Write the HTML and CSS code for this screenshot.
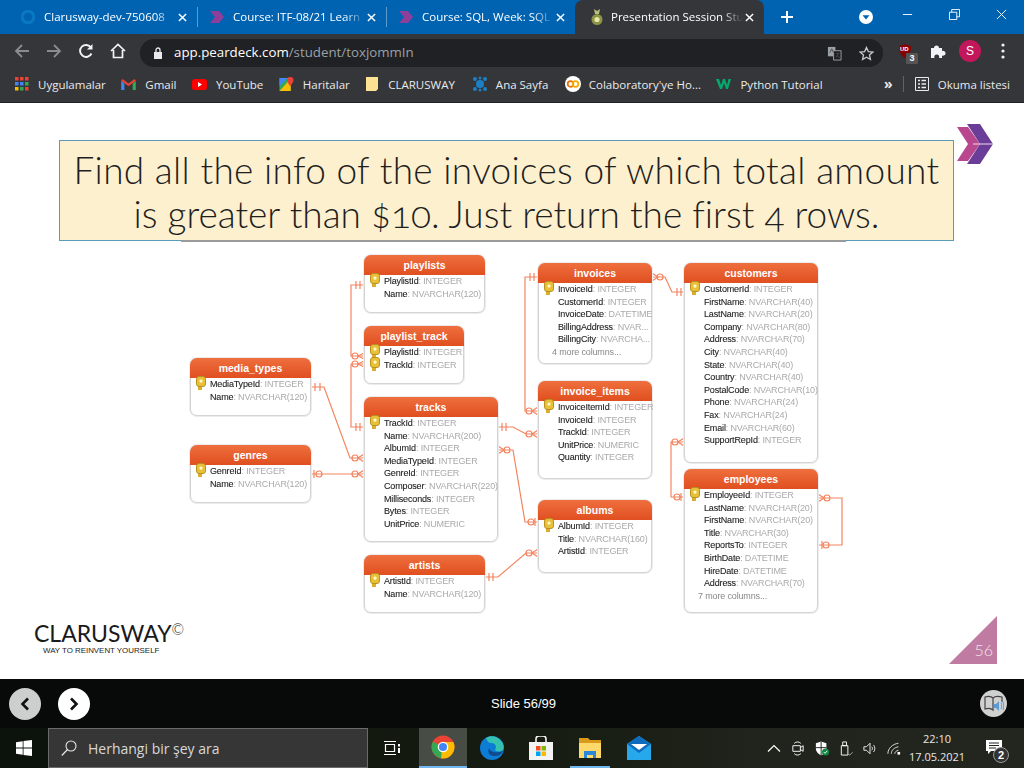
FILE: index.html
```html
<!DOCTYPE html>
<html lang="tr">
<head>
<meta charset="utf-8">
<title>Presentation Session</title>
<link rel="stylesheet" href="styles.css">
</head>
<body>
<div class="screen">
  <header class="tabstrip">
    <div class="tab">
      <svg class="ticon" viewBox="0 0 16 16"><circle cx="8" cy="8" r="5.8" fill="none" stroke="#0a78c2" stroke-width="3"/></svg>
      <span class="ttext">Clarusway-dev-750608</span>
      <svg class="tclose" viewBox="0 0 10 10"><path d="M1 1l8 8M9 1l-8 8" stroke="#fff" stroke-width="1.6"/></svg>
    </div>
    <div class="tab sep">
      <svg class="ticon" viewBox="0 0 16 16"><path d="M1 2h5l5 6-5 6H1l5-6zM6 2h4l5 6-5 6H6l5-6z" fill="#8e3f9a"/></svg>
      <span class="ttext">Course: ITF-08/21 Learn</span>
      <svg class="tclose" viewBox="0 0 10 10"><path d="M1 1l8 8M9 1l-8 8" stroke="#fff" stroke-width="1.6"/></svg>
    </div>
    <div class="tab sep">
      <svg class="ticon" viewBox="0 0 16 16"><path d="M1 2h5l5 6-5 6H1l5-6zM6 2h4l5 6-5 6H6l5-6z" fill="#8e3f9a"/></svg>
      <span class="ttext">Course: SQL, Week: SQL</span>
      <svg class="tclose" viewBox="0 0 10 10"><path d="M1 1l8 8M9 1l-8 8" stroke="#fff" stroke-width="1.6"/></svg>
    </div>
    <div class="tab active">
      <svg class="ticon" viewBox="0 0 16 16"><path d="M5 0l3 2 3-2-1 5H6z" fill="#b9c07a"/><ellipse cx="8" cy="10.500" rx="5.500" ry="5.500" fill="#8c9448"/><circle cx="8" cy="10.500" r="2.600" fill="#e8e6a8"/></svg>
      <span class="ttext">Presentation Session Stu</span>
      <svg class="tclose" viewBox="0 0 10 10"><path d="M1 1l8 8M9 1l-8 8" stroke="#fff" stroke-width="1.6"/></svg>
    </div>
    <svg class="newtab" viewBox="0 0 12 12"><path d="M6 0v12M0 6h12" stroke="#fff" stroke-width="2"/></svg>
    <svg class="profile-drop" viewBox="0 0 14 14"><circle cx="7" cy="7" r="7" fill="#fff"/><path d="M3.500 5.200h7L7 9.600z" fill="#0063b1"/></svg>
    <div class="winctl">
      <svg viewBox="0 0 12 12"><path d="M1 6h10" stroke="#fff"/></svg>
      <svg viewBox="0 0 12 12"><path d="M.5 3.500h8v8h-8zM3 3.500V.5h8.500v8H8.500" fill="none" stroke="#fff"/></svg>
      <svg viewBox="0 0 12 12"><path d="M1 1l10 10M11 1L1 11" stroke="#fff"/></svg>
    </div>
  </header>

  <nav class="toolbar">
    <svg class="tb dim" viewBox="0 0 16 16"><path d="M15 8H2M8 2L2 8l6 6" fill="none" stroke="#8b8c8e" stroke-width="1.8"/></svg>
    <svg class="tb dim" viewBox="0 0 16 16"><path d="M1 8h13M8 2l6 6-6 6" fill="none" stroke="#8b8c8e" stroke-width="1.8"/></svg>
    <svg class="tb" viewBox="0 0 16 16"><path d="M13.500 10.500A6 6 0 1 1 13 4.500" fill="none" stroke="#f1f3f4" stroke-width="1.900"/><path d="M14.500 1v5.500H9z" fill="#f1f3f4"/></svg>
    <svg class="tb" viewBox="0 0 16 16"><path d="M1 8l7-6.500L15 8M3.500 7v7.500h9V7" fill="none" stroke="#f1f3f4" stroke-width="1.700"/></svg>
    <div class="omnibox">
      <svg class="lock" viewBox="0 0 10 12"><path d="M1 5h8v7H1z" fill="#e8eaed"/><path d="M3 5V3a2 2 0 0 1 4 0v2" fill="none" stroke="#e8eaed" stroke-width="1.300"/></svg>
      <span class="url"><b>app.peardeck.com</b>/student/toxjommIn</span>
      <svg class="omni-icon" viewBox="0 0 16 16"><path d="M1 1h8v10H1z" fill="#9aa0a6"/><path d="M7 5h8v10H7z" fill="#202124" stroke="#9aa0a6"/><path d="M3 7l2-4 2 4M10 8h3M11.500 8c0 2-1 3-2 4M10.500 10c1 1 2 2 3 2" fill="none" stroke="#4a4b4e"/></svg>
      <svg class="omni-icon star" viewBox="0 0 16 16"><path d="M8 1.500l2 4.400 4.800.5-3.600 3.200 1 4.700L8 11.900l-4.200 2.400 1-4.700L1.200 6.400 6 5.900z" fill="none" stroke="#c4c7c5" stroke-width="1.400"/></svg>
    </div>
    <div class="ublock">
      <svg viewBox="0 0 16 16"><path d="M1 2.500L8 0l7 2.500c0 6-2 10.500-7 13.500-5-3-7-7.500-7-13.500z" fill="#800"/></svg>
      <span class="ub-txt">UD</span>
      <span class="badge">3</span>
    </div>
    <svg class="tb puzzle" viewBox="0 0 16 16"><path d="M1 5h3a2.500 2.500 0 1 1 5 0h3v3a2.500 2.500 0 1 1 0 4.500V15H9a2.500 2.500 0 1 0-4.500 0H1z" fill="#f1f3f4"/></svg>
    <div class="avatar">S</div>
    <svg class="kebab" viewBox="0 0 4 16"><circle cx="2" cy="2" r="1.600" fill="#f1f3f4"/><circle cx="2" cy="8" r="1.600" fill="#f1f3f4"/><circle cx="2" cy="14" r="1.600" fill="#f1f3f4"/></svg>
  </nav>

  <nav class="bookmarks">
    <div class="bm bm-apps"><svg viewBox="0 0 14 14"><g fill="#ea4335"><path d="M0 0h3.500v3.500H0zM5 0h3.500v3.500H5zM10 0h3.500v3.500H10z"/></g><g fill="#4285f4"><path d="M0 5h3.500v3.500H0zM5 5h3.500v3.500H5z"/></g><path d="M10 5h3.500v3.500H10z" fill="#34a853"/><g fill="#fbbc04"><path d="M0 10h3.500v3.500H0z"/></g><path d="M5 10h3.500v3.500H5z" fill="#34a853"/><path d="M10 10h3.500v3.500H10z" fill="#ea4335"/></svg><span>Uygulamalar</span></div>
    <div class="bm bm-gmail"><svg viewBox="0 0 16 12"><path d="M0 2v10h3.500V5z" fill="#4285f4"/><path d="M12.500 5v7H16V2z" fill="#34a853"/><path d="M0 2l8 6 8-6-1.500-2L8 4.800 1.500 0z" fill="#ea4335"/></svg><span>Gmail</span></div>
    <div class="bm bm-yt"><svg viewBox="0 0 15 11"><rect width="15" height="11" rx="2.500" fill="#f00"/><path d="M6 3l4 2.500L6 8z" fill="#fff"/></svg><span>YouTube</span></div>
    <div class="bm bm-maps"><svg viewBox="0 0 15 15"><path d="M0 1h12v14H0z" fill="#34a853"/><path d="M0 15L9 5l3 4v6z" fill="#fbbc04"/><path d="M0 1h9L0 10z" fill="#4285f4"/><path d="M11.500 0a3.500 3.500 0 0 1 3.500 3.500c0 2-2 4-3.500 6.500C10 7.500 8 5.500 8 3.500A3.500 3.500 0 0 1 11.500 0z" fill="#ea4335"/></svg><span>Haritalar</span></div>
    <div class="bm bm-note"><svg viewBox="0 0 12 14"><path d="M0 0h12v12l-2 2H0z" fill="#fde293"/></svg><span>CLARUSWAY</span></div>
    <div class="bm bm-ana"><svg viewBox="0 0 16 16"><g fill="#1c7fc4"><circle cx="8" cy="8" r="4"/><circle cx="3" cy="3" r="2"/><circle cx="13" cy="3" r="2"/><circle cx="3" cy="13" r="2"/><circle cx="13" cy="13" r="2"/><circle cx="8" cy="2" r="1.500"/><circle cx="8" cy="14" r="1.500"/></g></svg><span>Ana Sayfa</span></div>
    <div class="bm bm-colab"><svg viewBox="0 0 16 16"><circle cx="8" cy="8" r="8" fill="#fff"/><circle cx="5.500" cy="8" r="2.800" fill="none" stroke="#e8710a" stroke-width="1.800"/><circle cx="10.500" cy="8" r="2.800" fill="none" stroke="#f9ab00" stroke-width="1.800"/></svg><span>Colaboratory'ye Ho...</span></div>
    <div class="bm bm-w3"><svg viewBox="0 0 16 12"><path d="M0 1h3l2 6 2-6h2l2 6 1.500-6H15l-3 10h-2L8 5l-2 6H4z" fill="#04aa6d"/></svg><span>Python Tutorial</span></div>
    <div class="bm-end">
      <span class="more">»</span>
      <span class="bm-sep"></span>
      <svg class="read" viewBox="0 0 14 14"><path d="M.5.500h13v13H.500z" fill="none" stroke="#e8eaed"/><path d="M3 3.500h2M6.500 3.500H11M3 7h2M6.500 7H11M3 10.500h2M6.500 10.500H11" stroke="#e8eaed" stroke-width="1.400"/></svg>
      <span class="read-txt">Okuma listesi</span>
    </div>
  </nav>

  <main class="slide">
    <div class="titlebox"><span class="line-a">Find all the info of the invoices of which total amount</span><span class="line-b">is greater than $10. Just return the first 4 rows.</span></div>
    <svg class="brand" viewBox="0 0 36 40"><path d="M0 3h11l12 17-12 17H0l11-17z" fill="#b8478f"/><path d="M10 0h13l13 20-13 20H10l13-20z" fill="#6a3d98"/><path d="M16 20h20" stroke="#f3d9ec" stroke-width="1"/></svg>

    <section class="diagram">
      <svg class="links" viewBox="0 250 1024 364">
        <g fill="none" stroke="#f4845f" stroke-width="1.200">
          <path d="M364 285H351V356H364M351 364H364M351 364V427H364"/>
          <path d="M311 387H324L350 458H364"/>
          <path d="M311 474H364"/>
          <path d="M498 427H513L526 434H538"/>
          <path d="M498 450H513L525 522H538"/>
          <path d="M485 577H498L526 553H538"/>
          <path d="M538 277H525V411H538"/>
          <path d="M652 277H665L672 292H684"/>
          <path d="M684 442H671V497H684"/>
          <path d="M818 498H842V545H818"/>
          <path d="M356 281v8M360 281v8M315 383v8M320 383v8M356 423v8M360 423v8M314 470v8M502 423v8M506 423v8M489 573v8M493 573v8M530 273v8M534 273v8M677 288v8M681 288v8M535 518v8M681 493v8M822 541v8"/>
          <path d="M364 353L358 356L364 359M364 361L358 364L364 367M364 454L358 458L364 462M364 470L358 474L364 478M538 407L532 411L538 415M538 430L532 434L538 438M538 549L532 553L538 557M652 273L658 277L652 281M498 446L504 450L498 454M684 438L678 442L684 446M818 494L824 498L818 502"/>
          <circle cx="355" cy="356" r="3"/><circle cx="355" cy="364" r="3"/><circle cx="355" cy="458" r="3"/><circle cx="355" cy="474" r="3"/><circle cx="319" cy="474" r="3"/><circle cx="529" cy="411" r="3"/><circle cx="529" cy="434" r="3"/><circle cx="507" cy="450" r="3"/><circle cx="531" cy="522" r="3"/><circle cx="529" cy="553" r="3"/><circle cx="660" cy="277" r="3"/><circle cx="675" cy="442" r="3"/><circle cx="677" cy="497" r="3"/><circle cx="827" cy="498" r="3"/><circle cx="826" cy="545" r="3"/>
        </g>
      </svg>

      <article class="tbl t-playlists"><h3>playlists</h3>
        <p class="pk">PlaylistId<i>: INTEGER</i></p><p>Name<i>: NVARCHAR(120)</i></p></article>
      <article class="tbl t-track2"><h3>playlist_track</h3>
        <p class="pk">PlaylistId<i>: INTEGER</i></p><p class="pk">TrackId<i>: INTEGER</i></p></article>
      <article class="tbl t-media"><h3>media_types</h3>
        <p class="pk">MediaTypeId<i>: INTEGER</i></p><p>Name<i>: NVARCHAR(120)</i></p></article>
      <article class="tbl t-tracks"><h3>tracks</h3>
        <p class="pk">TrackId<i>: INTEGER</i></p><p>Name<i>: NVARCHAR(200)</i></p><p>AlbumId<i>: INTEGER</i></p><p>MediaTypeId<i>: INTEGER</i></p><p>GenreId<i>: INTEGER</i></p><p>Composer<i>: NVARCHAR(220)</i></p><p>Milliseconds<i>: INTEGER</i></p><p>Bytes<i>: INTEGER</i></p><p>UnitPrice<i>: NUMERIC</i></p></article>
      <article class="tbl t-genres"><h3>genres</h3>
        <p class="pk">GenreId<i>: INTEGER</i></p><p>Name<i>: NVARCHAR(120)</i></p></article>
      <article class="tbl t-artists"><h3>artists</h3>
        <p class="pk">ArtistId<i>: INTEGER</i></p><p>Name<i>: NVARCHAR(120)</i></p></article>
      <article class="tbl t-invoices"><h3>invoices</h3>
        <p class="pk">InvoiceId<i>: INTEGER</i></p><p>CustomerId<i>: INTEGER</i></p><p>InvoiceDate<i>: DATETIME</i></p><p>BillingAddress<i>: NVAR...</i></p><p>BillingCity<i>: NVARCHA...</i></p><p class="morecols">4 more columns...</p></article>
      <article class="tbl t-items"><h3>invoice_items</h3>
        <p class="pk">InvoiceItemId<i>: INTEGER</i></p><p>InvoiceId<i>: INTEGER</i></p><p>TrackId<i>: INTEGER</i></p><p>UnitPrice<i>: NUMERIC</i></p><p>Quantity<i>: INTEGER</i></p></article>
      <article class="tbl t-albums"><h3>albums</h3>
        <p class="pk">AlbumId<i>: INTEGER</i></p><p>Title<i>: NVARCHAR(160)</i></p><p>ArtistId<i>: INTEGER</i></p></article>
      <article class="tbl t-customers"><h3>customers</h3>
        <p class="pk">CustomerId<i>: INTEGER</i></p><p>FirstName<i>: NVARCHAR(40)</i></p><p>LastName<i>: NVARCHAR(20)</i></p><p>Company<i>: NVARCHAR(80)</i></p><p>Address<i>: NVARCHAR(70)</i></p><p>City<i>: NVARCHAR(40)</i></p><p>State<i>: NVARCHAR(40)</i></p><p>Country<i>: NVARCHAR(40)</i></p><p>PostalCode<i>: NVARCHAR(10)</i></p><p>Phone<i>: NVARCHAR(24)</i></p><p>Fax<i>: NVARCHAR(24)</i></p><p>Email<i>: NVARCHAR(60)</i></p><p>SupportRepId<i>: INTEGER</i></p></article>
      <article class="tbl t-employees"><h3>employees</h3>
        <p class="pk">EmployeeId<i>: INTEGER</i></p><p>LastName<i>: NVARCHAR(20)</i></p><p>FirstName<i>: NVARCHAR(20)</i></p><p>Title<i>: NVARCHAR(30)</i></p><p>ReportsTo<i>: INTEGER</i></p><p>BirthDate<i>: DATETIME</i></p><p>HireDate<i>: DATETIME</i></p><p>Address<i>: NVARCHAR(70)</i></p><p class="morecols">7 more columns...</p></article>
    </section>

    <footer class="slidefoot">
      <div class="logo">
        <div class="logo-main">CLARUSWAY<sup>©</sup></div>
        <div class="logo-sub">WAY TO REINVENT YOURSELF</div>
      </div>
      <div class="pagenum"><span>56</span></div>
    </footer>
  </main>

  <section class="slidebar">
    <button class="round prev"><svg viewBox="0 0 10 14"><path d="M8 1.500L2.500 7 8 12.500" fill="none" stroke="#111" stroke-width="2.600"/></svg></button>
    <button class="round next"><svg viewBox="0 0 10 14"><path d="M2 1.500L7.500 7 2 12.500" fill="none" stroke="#111" stroke-width="2.600"/></svg></button>
    <span class="slidecount">Slide 56/99</span>
    <div class="readaloud"><svg viewBox="0 0 20 18"><path d="M1 2c3-1 6-1 8 1v12c-2-2-5-2-8-1zM9 3c2-2 5-2 9-1v5" fill="none" stroke="#444" stroke-width="1.200"/><path d="M10 9h2l3-3v10l-3-3h-2z" fill="#5b9bd5"/><path d="M17 8c1 2 1 4 0 6M19 7c1 3 1 5 0 8" fill="none" stroke="#5b9bd5"/></svg></div>
  </section>

  <footer class="taskbar">
    <svg class="win" viewBox="0 0 16 16"><path d="M0 2.200l6.700-1v6.400H0zM7.500 1.100L16 0v7.600H7.500zM0 8.400h6.700v6.400l-6.700-1zM7.500 8.400H16V16l-8.500-1.100z" fill="#fff"/></svg>
    <div class="search">
      <svg viewBox="0 0 16 16"><circle cx="10" cy="6" r="5" fill="none" stroke="#e6e6e6" stroke-width="1.100"/><path d="M6.500 9.500L.800 15.500" stroke="#e6e6e6" stroke-width="1.200"/></svg>
      <span>Herhangi bir şey ara</span>
    </div>
    <svg class="taskview" viewBox="0 0 16 16"><path d="M0 1.500h12M0 14.500h12M1.500 4.500h9v7h-9z" fill="none" stroke="#fff" stroke-width="1.200"/><path d="M14 4h2v2.500h-2zM14 8h2v5h-2z" fill="#fff"/></svg>
    <div class="app chrome"><svg viewBox="0 0 24 24"><circle cx="12" cy="12" r="11.500" fill="#ea4335"/><path d="M12 12L2 6.500A11.500 11.500 0 0 0 10 23.300z" fill="#34a853"/><path d="M12 7h10.300A11.500 11.500 0 0 1 10 23.300z" fill="#fbbc04"/><circle cx="12" cy="12" r="5.300" fill="#fff"/><circle cx="12" cy="12" r="4" fill="#4285f4"/></svg></div>
    <div class="app"><svg viewBox="0 0 24 24"><circle cx="12" cy="12" r="12" fill="#0c7cd5"/><path d="M6 2c5-3 12-2 16 4 2 3 2 6 1 8-1 2-6 2-8 0 2-3 1-7-4-7-3 0-4-3-5-5z" fill="#35c1b0"/><path d="M14 20c-4 0-7-3-5-8 1 4 6 5 10 4 2 0 3-1 4-2-1 4-4 6-9 6z" fill="#114a8b"/></svg></div>
    <div class="app"><svg viewBox="0 0 24 24"><path d="M0 6h24v18H0z" fill="#f3f3f3"/><path d="M7 7V3a3 3 0 0 1 3-3h4a3 3 0 0 1 3 3v4" fill="none" stroke="#f3f3f3" stroke-width="1.600"/><path d="M7 10h4.500v4.500H7z" fill="#f25022"/><path d="M12.500 10H17v4.500h-4.500z" fill="#7fba00"/><path d="M7 15.500h4.500V20H7z" fill="#00a4ef"/><path d="M12.500 15.500H17V20h-4.500z" fill="#ffb900"/></svg></div>
    <div class="app open"><svg viewBox="0 0 24 24"><path d="M1 2h9l2 2h11v18H1z" fill="#d99a1c"/><path d="M1 7h22v15H1z" fill="#ffd86b"/><path d="M6 15h12v7h-3v-3H9v3H6z" fill="#2b87d8"/></svg></div>
    <div class="app"><svg viewBox="0 0 24 24"><path d="M0 8L12 0l12 8v16H0z" fill="#27a8ea"/><path d="M0 8l12 9 12-9L12 0z" fill="#0f6cbd"/><path d="M4 8h16l-8 6z" fill="#fff"/></svg></div>
    <div class="tray">
      <svg viewBox="0 0 14 8"><path d="M1 7l6-6 6 6" fill="none" stroke="#fff" stroke-width="1.200"/></svg>
      <svg viewBox="0 0 14 16"><path d="M1.500 5h8v6h-8zM9.500 7l3-2v6l-3-2" fill="none" stroke="#fff"/><path d="M3 2.500c2-2 5-2 7 0M3 13.500c2 2 5 2 7 0" fill="none" stroke="#fff"/></svg>
      <svg viewBox="0 0 16 16"><path d="M1 2l6-2 6 2v6c0 4-3 6-6 8-3-2-6-4-6-8z" fill="#fff"/><path d="M7 0v16" stroke="#111"/><path d="M1 7h12" stroke="#111"/><circle cx="12" cy="12" r="4" fill="#0f8a44"/><path d="M10 12l1.500 1.500 2.500-3" fill="none" stroke="#fff"/></svg>
      <svg viewBox="0 0 14 16"><path d="M2 5h7v10H2zM3.500 1h4v4h-4z" fill="none" stroke="#fff"/><path d="M9 14l2 1 3-3" fill="none" stroke="#aaa"/></svg>
      <svg viewBox="0 0 16 14"><path d="M1 5h3l4-4v12l-4-4H1z" fill="none" stroke="#fff"/><path d="M10 5c1 1 1 3 0 4M12 3c2 2 2 6 0 8" fill="none" stroke="#fff"/></svg>
      <svg viewBox="0 0 16 14"><path d="M1 13C1 7 6 2 13 1M5 13c0-4 3-7 8-8M9 13c0-2 1-3 4-4" fill="none" stroke="#ddd" stroke-width="1.100"/><path d="M12 11h3v3h-3z" fill="#fff"/></svg>
    </div>
    <div class="clock"><span>22:10</span><span>17.05.2021</span></div>
    <div class="notif">
      <svg viewBox="0 0 16 14"><path d="M0 0h16v11H5l-3 3v-3H0z" fill="#fff"/><path d="M3 3h10M3 5.500h10M3 8h7" stroke="#222"/></svg>
      <span class="notif-n">2</span>
    </div>
  </footer>
</div>
</body>
</html>
```
FILE: styles.css
```css
* { box-sizing: border-box; }
html, body { margin: 0; padding: 0; }
body { width: 1024px; height: 768px; overflow: hidden; font-family: "Open Sans", "Liberation Sans", sans-serif; background: #fff; }
.screen { width: 1024px; height: 768px; display: flex; flex-direction: column; }
svg { display: block; flex: none; }

/* tab strip */
.tabstrip { height: 34px; background: #0063b1; display: flex; align-items: stretch; padding-left: 8px; color: #fff; font-size: 11.500px; }
.tab { width: 189px; display: flex; align-items: center; padding: 0 10px 0 12px; position: relative; }
.tab.sep::before { content: ""; position: absolute; left: 0; top: 7px; height: 20px; width: 1px; background: #5d9ccf; }
.tab.active { background: #35363a; border-radius: 8px 8px 0 0; padding-left: 14px; }
.ticon { width: 16px; height: 16px; }
.ttext { flex: 1; margin: 0 0 2px 8px; white-space: nowrap; overflow: hidden; -webkit-mask-image: linear-gradient(to right, #000 84%, transparent); mask-image: linear-gradient(to right, #000 84%, transparent); }
.active .ttext { margin-left: 6px; }
.tclose { width: 9px; height: 9px; margin-left: 2px; }
.newtab { width: 12px; height: 12px; margin: 11px 0 0 17px; }
.profile-drop { width: 14px; height: 14px; margin: 10px 0 0 66px; }
.winctl { margin-left: auto; display: flex; align-items: flex-start; }
.winctl svg { width: 11px; height: 11px; margin: 9px 17px 0 18px; }
.winctl svg + svg { margin-left: 19px; }
.winctl svg:last-child { margin-right: 17px; }

/* toolbar */
.toolbar { height: 34px; background: #35363a; display: flex; align-items: center; padding: 0 0 0 14px; }
.tb { width: 16px; height: 16px; margin-right: 16px; }
.omnibox { width: 743px; height: 28px; margin-left: -2px; background: #202124; border-radius: 14px; display: flex; align-items: center; padding-left: 13px; position: relative; top: 2px; }
.lock { width: 10px; height: 12px; }
.url { margin: 0 0 2px 11px; font-size: 13.300px; color: #9aa0a6; white-space: nowrap; flex: 1; }
.url b { font-weight: 400; color: #fff; }
.omni-icon { width: 15px; height: 15px; margin-right: 17px; }
.omni-icon.star { margin-right: 9px; }
.ublock { position: relative; width: 16px; height: 16px; margin: 0 0 0 15px; }
.ublock svg { width: 14px; height: 16px; }
.ub-txt { position: absolute; left: 2px; top: 3px; font: 700 6px "Liberation Sans", sans-serif; color: #fff; }
.badge { position: absolute; left: 8px; top: 10px; width: 12px; height: 11px; background: #555; color: #fff; font: 700 9px/11px "Liberation Sans", sans-serif; text-align: center; border-radius: 1px; }
.puzzle { margin: 0 0 0 16px; }
.avatar { width: 22px; height: 22px; border-radius: 50%; background: #c2185b; color: #fff; font: 12px/22px "Liberation Sans", sans-serif; text-align: center; margin-left: 13px; }
.kebab { width: 4px; height: 16px; margin-left: 20px; }

/* bookmarks */
.bookmarks { height: 35px; background: #35363a; border-bottom: 1px solid #202124; display: flex; align-items: center; padding: 0 0 2px 15px; color: #e8eaed; font-size: 11.500px; }
.bm { display: flex; align-items: center; white-space: nowrap; margin-right: 15.500px; }
.bm svg { width: 15px; height: 14px; margin-right: 9px; }
.bm-apps svg { width: 14px; height: 14px; margin-right: 9px; }
.bm-gmail svg { height: 11px; }
.bm-yt svg { height: 11px; }
.bm-note { margin-left: 1px; }
.bm-note svg { width: 12px; height: 14px; margin-right: 10px; }
.bm-ana { margin-left: 1.500px; }
.bm-colab { margin-left: 1px; }
.bm-ana svg, .bm-colab svg, .bm-w3 svg { width: 16px; height: 16px; margin-right: 8px; }
.bm-w3 svg { height: 12px; }
.bm-end { margin-left: auto; display: flex; align-items: center; padding-right: 14px; }
.more { font-size: 14px; font-weight: 700; line-height: 1; margin-right: 10px; }
.bm-sep { width: 1px; height: 16px; background: #5f6368; margin-right: 11px; }
.read { width: 14px; height: 14px; margin-right: 9px; }
.read-txt { white-space: nowrap; }

/* slide */
.slide { height: 576px; background: #fff; position: relative; display: flex; flex-direction: column; padding-top: 37px; }
.titlebox { width: 895px; height: 101px; margin-left: 59px; flex: none; background: #fdf0cf; border: 1px solid #5a9cb8; text-align: center; font: 300 37px/44px Lato, "Open Sans", sans-serif; font-variant-numeric: oldstyle-nums; color: #1f1f1f; padding-top: 7px; white-space: nowrap; position: relative; }
.titlebox::after { content: ""; position: absolute; left: 121px; bottom: -2px; width: 665px; height: 2px; background: #9a9a9a; }
.line-a, .line-b { display: block; }
.line-a { letter-spacing: .31px; }
.brand { position: absolute; left: 957px; top: 21px; width: 36px; height: 40px; }
.diagram { position: relative; height: 364px; margin-top: 9px; flex: none; filter: blur(.35px); }
.links { position: absolute; left: 0; top: 0; width: 1024px; height: 364px; }
.tbl { position: absolute; background: #fff; border: 1px solid #d4d4d4; border-radius: 7px; box-shadow: 0 0 0 1px #ececec; font: 9px/12.60px "Liberation Sans", sans-serif; color: #222; }
.tbl h3 { margin: -1px -1px 0; height: 20px; border-radius: 7px 7px 0 0; background: linear-gradient(#ef6f3e, #e04f20); color: #fff; font: 700 10.500px/21px "Liberation Sans", sans-serif; text-align: center; }
.tbl p { margin: 0; padding-left: 19px; white-space: nowrap; letter-spacing: -.15px; position: relative; -webkit-text-stroke: .1px #222; }
.tbl i { font-style: normal; color: #aaa; -webkit-text-stroke: 0; }
.tbl .morecols { padding-left: 13px; color: #888; -webkit-text-stroke: 0; }
.pk::before { content: ""; position: absolute; left: 5px; top: -2px; width: 8px; height: 9px; background: radial-gradient(circle at 50% 45%, #fff6c8 22%, #e8c03a 28%); border: 1px solid #b8921f; border-radius: 3px; z-index: 1; }
.pk::after { content: ""; position: absolute; left: 7px; top: 6px; width: 4px; height: 6px; background: #dcae2c; }
.t-playlists { left: 364px; top: 5px; width: 121px; height: 58px; }
.t-track2 { left: 364px; top: 76px; width: 100px; height: 58px; }
.t-media { left: 190px; top: 108px; width: 121px; height: 58px; }
.t-tracks { left: 364px; top: 147px; width: 134px; height: 145px; }
.t-genres { left: 190px; top: 195px; width: 121px; height: 58px; }
.t-artists { left: 364px; top: 305px; width: 121px; height: 58px; }
.t-invoices { left: 538px; top: 13px; width: 114px; height: 101px; }
.t-items { left: 538px; top: 131px; width: 114px; height: 98px; }
.t-albums { left: 538px; top: 250px; width: 114px; height: 73px; }
.t-customers { left: 684px; top: 13px; width: 134px; height: 200px; }
.t-employees { left: 684px; top: 219px; width: 134px; height: 144px; }

.slidefoot { flex: 1; display: flex; justify-content: space-between; align-items: flex-start; padding: 0 27px 0 34px; }
.logo { margin-top: 6px; }
.logo-main { font: 400 23px/26px Lato, "Liberation Sans", sans-serif; color: #1a1a1a; white-space: nowrap; }
.logo-main sup { font-size: 15px; font-weight: 300; line-height: 0; vertical-align: 7px; }
.logo-sub { font: 400 7.900px/9px "Liberation Sans", sans-serif; color: #222; margin: 0 0 0 9px; white-space: nowrap; }
.pagenum { width: 48px; height: 48px; margin-top: 2px; background: #bf7ba2; clip-path: polygon(100% 0, 100% 100%, 0 100%); display: flex; align-items: flex-end; justify-content: flex-end; padding: 0 4px 4px 0; }
.pagenum span { color: #f3e4ec; font: 300 16px/20px Lato, sans-serif; }

/* slide bar */
.slidebar { height: 49px; background: #080a0a; display: flex; align-items: center; padding-left: 9px; position: relative; }
.round { width: 32px; height: 32px; border: 0; border-radius: 50%; padding: 0; display: flex; align-items: center; justify-content: center; }
.round svg { width: 10px; height: 14px; }
.prev { background: #cdcfcf; }
.next { background: #fff; margin-left: 17px; }
.slidecount { position: absolute; left: 491px; color: #fff; font: 13px/16px "Liberation Sans", sans-serif; }
.readaloud { margin-left: auto; margin-right: 17px; width: 27px; height: 27px; border-radius: 50%; background: #d0d0d0; display: flex; align-items: center; justify-content: center; }
.readaloud svg { width: 20px; height: 18px; }

/* taskbar */
.taskbar { height: 40px; background: linear-gradient(90deg, #0c120c, #141a10 45%, #20241c 75%, #23261f); display: flex; align-items: center; }
.win { width: 16px; height: 16px; margin: 0 16px; }
.search { width: 320px; height: 40px; background: #363636; border: 1px solid #6a6a6a; display: flex; align-items: center; padding-left: 12px; color: #d8d8d8; font-size: 14px; }
.search svg { width: 16px; height: 16px; margin-right: 11px; }
.taskview { width: 16px; height: 16px; margin: 0 19px 0 16px; }
.app { width: 48px; height: 40px; display: flex; align-items: center; justify-content: center; margin-right: 1px; position: relative; }
.app svg { width: 24px; height: 24px; }
.chrome { background: #474c45; border-bottom: 2px solid #72b8f0; }
.open::after { content: ""; position: absolute; left: 4px; right: 4px; bottom: 0; height: 2px; background: #72b8f0; }
.tray { margin-left: 103px; display: flex; align-items: center; gap: 10px; width: 136px; }
.tray svg { width: 14px; height: 15px; }
.clock { width: 58px; margin-left: 5px; display: flex; flex-direction: column; align-items: center; color: #e8e8e8; font-size: 11px; line-height: 18px; white-space: nowrap; }
.notif { position: relative; margin-left: 20px; width: 16px; height: 16px; }
.notif svg { width: 16px; height: 14px; }
.notif-n { position: absolute; left: 7px; top: 7px; width: 16px; height: 16px; border-radius: 50%; background: #333; border: 1px solid #999; color: #fff; font: 700 11px/14px "Liberation Sans", sans-serif; text-align: center; }
```
